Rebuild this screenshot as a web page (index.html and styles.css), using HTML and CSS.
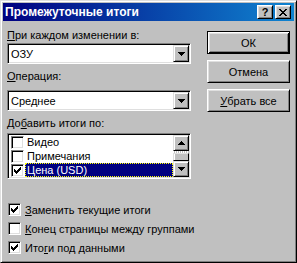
FILE: index.html
```html
<!DOCTYPE html>
<html lang="ru">
<head>
    <meta charset="UTF-8">
    <title>Промежуточные итоги</title>
    <link rel="stylesheet" href="styles.css">
</head>
<body>

    <div class="window">
        <!-- Title bar -->
        <div class="titlebar">
            <span class="title">Промежуточные итоги</span>
            <div class="caption-btns">
                <span class="cbtn help">?</span>
                <span class="cbtn close">
                    <svg width="8" height="7" viewBox="0 0 8 7" shape-rendering="crispEdges">
                        <path d="M0 0h2v1H0zM6 0h2v1H6zM1 1h2v1H1zM5 1h2v1H5zM2 2h4v1H2zM3 3h2v1H3zM2 4h4v1H2zM1 5h2v1H1zM5 5h2v1H5zM0 6h2v1H0zM6 6h2v1H6z" fill="#000"/>
                    </svg>
                </span>
            </div>
        </div>

        <div class="main">
            <div class="left">
                <div class="label first"><u>П</u>ри каждом изменении в:</div>
                <div class="combo">
                    <span class="combo-text">ОЗУ</span>
                    <span class="arrow-btn">
                        <svg width="7" height="4" viewBox="0 0 7 4" shape-rendering="crispEdges"><path d="M0 0h7v1H0zM1 1h5v1H1zM2 2h3v1H2zM3 3h1v1H3z" fill="#000"/></svg>
                    </span>
                </div>

                <div class="label second"><u>О</u>перация:</div>
                <div class="combo">
                    <span class="combo-text">Среднее</span>
                    <span class="arrow-btn">
                        <svg width="7" height="4" viewBox="0 0 7 4" shape-rendering="crispEdges"><path d="M0 0h7v1H0zM1 1h5v1H1zM2 2h3v1H2zM3 3h1v1H3z" fill="#000"/></svg>
                    </span>
                </div>

                <div class="label third">До<u>б</u>авить итоги по:</div>
                <div class="listbox">
                    <div class="items">
                        <div class="item">
                            <span class="check"></span>
                            <span class="item-text">Видео</span>
                        </div>
                        <div class="item">
                            <span class="check"></span>
                            <span class="item-text">Примечания</span>
                        </div>
                        <div class="item">
                            <span class="check">
                                <svg width="9" height="9" viewBox="0 0 9 9" shape-rendering="crispEdges"><path d="M1 3h1v3H1zM2 4h1v3H2zM3 5h1v3H3zM4 4h1v3H4zM5 3h1v3H5zM6 2h1v3H6zM7 1h1v3H7z" fill="#000"/></svg>
                            </span>
                            <span class="item-text selected">Цена (USD)</span>
                        </div>
                    </div>
                    <div class="scrollbar">
                        <span class="sbtn">
                            <svg width="7" height="4" viewBox="0 0 7 4" shape-rendering="crispEdges"><path d="M3 0h1v1H3zM2 1h3v1H2zM1 2h5v1H1zM0 3h7v1H0z" fill="#000"/></svg>
                        </span>
                        <span class="track"></span>
                        <span class="thumb"></span>
                        <span class="sbtn">
                            <svg width="7" height="4" viewBox="0 0 7 4" shape-rendering="crispEdges"><path d="M0 0h7v1H0zM1 1h5v1H1zM2 2h3v1H2zM3 3h1v1H3z" fill="#000"/></svg>
                        </span>
                    </div>
                </div>
            </div>

            <div class="buttons">
                <div class="btn default">ОК</div>
                <div class="btn">Отмена</div>
                <div class="btn"><u>У</u>брать все</div>
            </div>
        </div>

        <!-- Options -->
        <div class="options">
            <div class="option">
                <span class="check">
                    <svg width="9" height="9" viewBox="0 0 9 9" shape-rendering="crispEdges"><path d="M1 3h1v3H1zM2 4h1v3H2zM3 5h1v3H3zM4 4h1v3H4zM5 3h1v3H5zM6 2h1v3H6zM7 1h1v3H7z" fill="#000"/></svg>
                </span>
                <span><u>З</u>аменить текущие итоги</span>
            </div>
            <div class="option">
                <span class="check"></span>
                <span><u>К</u>онец страницы между группами</span>
            </div>
            <div class="option">
                <span class="check">
                    <svg width="9" height="9" viewBox="0 0 9 9" shape-rendering="crispEdges"><path d="M1 3h1v3H1zM2 4h1v3H2zM3 5h1v3H3zM4 4h1v3H4zM5 3h1v3H5zM6 2h1v3H6zM7 1h1v3H7z" fill="#000"/></svg>
                </span>
                <span>Ито<u>г</u>и под данными</span>
            </div>
        </div>
    </div>

</body>
</html>
```

FILE: styles.css
```css
body {
    margin: 0;
    font-family: "Liberation Sans", Arial, sans-serif;
    font-size: 11px;
    color: #000;
    background: #c0c0c0;
}

u {
    text-decoration: underline;
    text-underline-offset: 1px;
}

/* Window frame */
.window {
    width: 297px;
    height: 263px;
    box-sizing: border-box;
    background: #c0c0c0;
    border: 1px solid;
    border-color: #dfdfdf #000 #000 #dfdfdf;
    box-shadow: inset 1px 1px #fff, inset -1px -1px #808080;
    padding: 2px;
}

/* Title bar */
.titlebar {
    height: 18px;
    display: flex;
    align-items: center;
    justify-content: space-between;
    padding: 0 3px 0 2px;
    background: linear-gradient(to right, #000080, #1084d0);
}

.title {
    color: #fff;
    font-weight: bold;
    font-size: 12px;
}

.caption-btns {
    display: flex;
    gap: 2px;
}

.cbtn {
    width: 16px;
    height: 14px;
    box-sizing: border-box;
    display: flex;
    align-items: center;
    justify-content: center;
    background: #c0c0c0;
    border: 1px solid;
    border-color: #fff #000 #000 #fff;
    box-shadow: inset 1px 1px #dfdfdf, inset -1px -1px #808080;
}

.cbtn.help {
    font-weight: bold;
    font-size: 11px;
    line-height: 12px;
}

/* Main area */
.main {
    display: flex;
    gap: 16px;
    padding: 0 4px;
}

.left {
    width: 184px;
}

.label {
    line-height: 13px;
    height: 13px;
}

.label.first {
    margin-top: 8px;
    margin-bottom: 1px;
}

.label.second {
    margin-top: 6px;
    margin-bottom: 7px;
}

.label.third {
    margin-top: 6px;
    margin-bottom: 3px;
}

/* Sunken fields */
.combo, .listbox, .check {
    box-sizing: border-box;
    border: 1px solid;
    border-color: #808080 #fff #fff #808080;
    box-shadow: inset 1px 1px #000, inset -1px -1px #dfdfdf;
    background: #fff;
}

.combo {
    height: 21px;
    padding: 1px;
    display: flex;
    align-items: center;
    justify-content: space-between;
}

.combo-text {
    padding-left: 2px;
}

.arrow-btn, .sbtn {
    width: 16px;
    height: 17px;
    box-sizing: border-box;
    display: flex;
    align-items: center;
    justify-content: center;
    background: #c0c0c0;
    border: 1px solid;
    border-color: #dfdfdf #000 #000 #dfdfdf;
    box-shadow: inset 1px 1px #fff, inset -1px -1px #808080;
}

/* List */
.listbox {
    height: 46px;
    padding: 1px;
    display: flex;
}

.items {
    flex: 1;
}

.item {
    height: 14px;
    display: flex;
    align-items: center;
    padding-left: 2px;
}

.check {
    width: 13px;
    height: 13px;
    flex: none;
    display: flex;
    align-items: center;
    justify-content: center;
}

.item-text {
    flex: 1;
    height: 14px;
    line-height: 14px;
    padding-left: 2px;
    margin-left: 1px;
    box-sizing: border-box;
}

.item-text.selected {
    background: #000080;
    color: #fff;
    border: 1px dotted #ffff00;
    line-height: 12px;
    padding-left: 1px;
}

.scrollbar {
    width: 16px;
    display: flex;
    flex-direction: column;
}

.sbtn {
    height: 16px;
}

.track {
    height: 2px;
    background: repeating-linear-gradient(to right, #fff 0 1px, #c0c0c0 1px 2px);
}

.thumb {
    height: 8px;
    box-sizing: border-box;
    background: #c0c0c0;
    border: 1px solid;
    border-color: #dfdfdf #000 #000 #dfdfdf;
    box-shadow: inset 1px 0 #fff;
}

/* Buttons */
.buttons {
    width: 83px;
    margin-top: 10px;
    display: flex;
    flex-direction: column;
    gap: 6px;
}

.btn {
    height: 23px;
    box-sizing: border-box;
    display: flex;
    align-items: center;
    justify-content: center;
    border: 1px solid;
    border-color: #fff #000 #000 #fff;
    box-shadow: inset 1px 1px #dfdfdf, inset -1px -1px #808080;
}

.btn.default {
    border-color: #000;
    box-shadow: inset 1px 1px #fff, inset -1px -1px #000, inset 2px 2px #dfdfdf, inset -2px -2px #808080;
}

/* Options */
.options {
    margin-top: 21px;
    padding: 0 5px;
}

.option {
    height: 19px;
    display: flex;
    align-items: center;
    gap: 4px;
}
```
